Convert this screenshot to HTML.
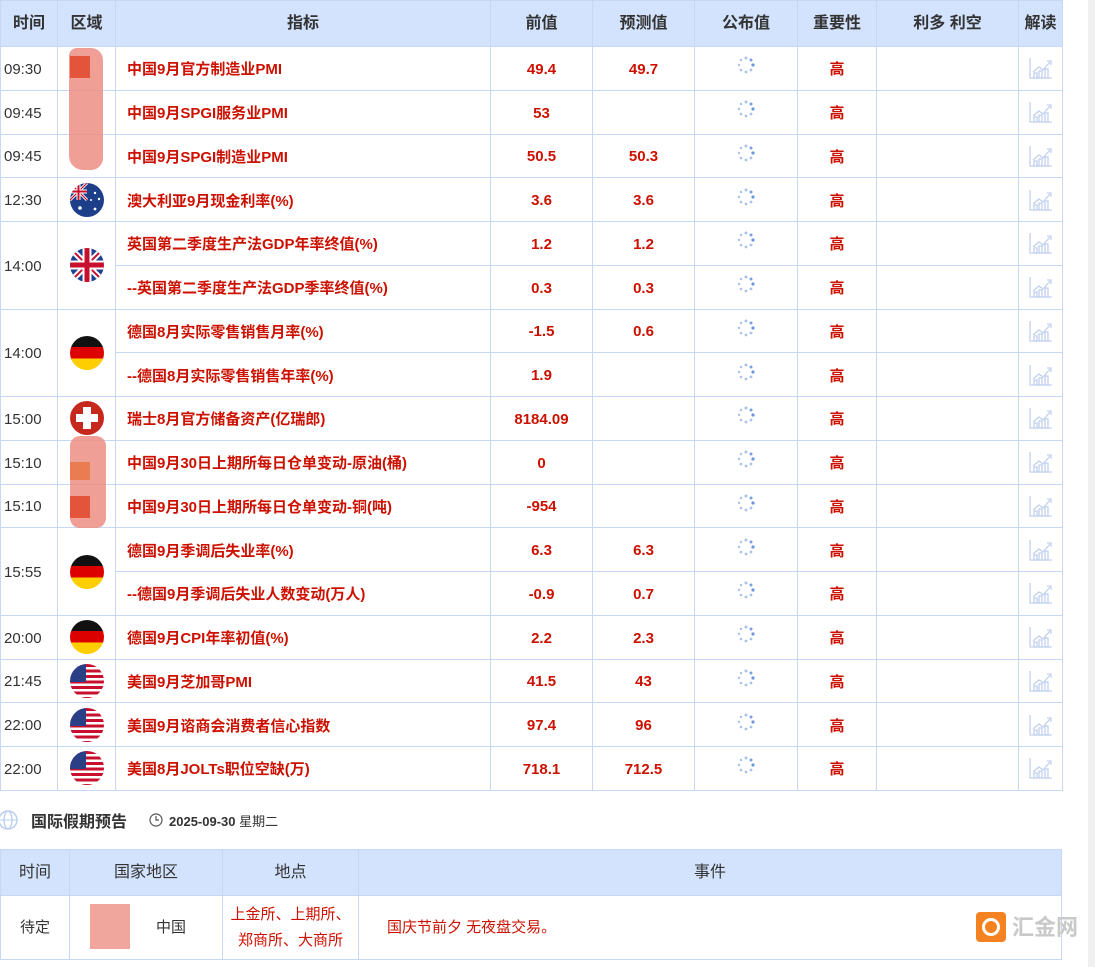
<!DOCTYPE html>
<html><head><meta charset="utf-8"><style>
*{margin:0;padding:0;box-sizing:border-box}
body{width:1095px;height:967px;background:#fff;font-family:"Liberation Sans","Noto Sans CJK SC",sans-serif;position:relative;overflow:hidden}
table{border-collapse:collapse;table-layout:fixed;position:absolute;left:0}
td,th{border:1px solid #c6d8f6;text-align:center;font-size:15px;vertical-align:middle;line-height:20px}
th{background:#d3e3fd;color:#333;font-weight:bold;height:46px;font-size:16px}
#t1 td{height:43.76px}
.t{color:#333;text-align:left;padding-left:3px;padding-top:3px}
.n{color:#cc1100;font-weight:bold;text-align:left;padding-left:11px;padding-top:4px}
.v{color:#cc1100;font-weight:bold;padding-top:3px}
.g{color:#cc1100;font-weight:bold;padding-top:4px}
.flag{width:34px;height:34px;border-radius:50%;margin:0 auto;overflow:hidden;position:relative;display:block}
.de{background:linear-gradient(#111 0 33%,#dd0000 33% 66%,#ffce00 66%)}
.us{background:repeating-linear-gradient(#c8102e 0 3px,#fff 3px 5.5px)}
.us::before{content:"";position:absolute;left:0;top:0;width:16px;height:18px;background:#2a3f85}
.blur{position:absolute;background:#ec8e84;opacity:.85}
.sc{position:absolute;right:0;top:0;width:7px;height:967px;background:#f0f0f0}
</style></head><body>
<table id="t1" style="top:0;width:1062px">
<colgroup><col style="width:57px"><col style="width:58px"><col style="width:375px"><col style="width:102px"><col style="width:102px"><col style="width:103px"><col style="width:79px"><col style="width:142px"><col style="width:44px"></colgroup>
<tr><th>时间</th><th>区域</th><th>指标</th><th>前值</th><th>预测值</th><th>公布值</th><th>重要性</th><th>利多 利空</th><th>解读</th></tr>
<tr><td class="t">09:30</td><td></td><td class="n">中国9月官方制造业PMI</td><td class="v">49.4</td><td class="v">49.7</td><td>S</td><td class="g">高</td><td></td><td>C</td></tr>
<tr><td class="t">09:45</td><td></td><td class="n">中国9月SPGI服务业PMI</td><td class="v">53</td><td class="v"></td><td>S</td><td class="g">高</td><td></td><td>C</td></tr>
<tr><td class="t">09:45</td><td></td><td class="n">中国9月SPGI制造业PMI</td><td class="v">50.5</td><td class="v">50.3</td><td>S</td><td class="g">高</td><td></td><td>C</td></tr>
<tr><td class="t">12:30</td><td><svg class="flag" viewBox="0 0 34 34"><rect width="34" height="34" fill="#1d3f8a"/><path d="M0 0L17 17M17 0L0 17" stroke="#fff" stroke-width="3"/><path d="M0 0L17 17M17 0L0 17" stroke="#c8102e" stroke-width="1.2"/><path d="M8.5 0v17M0 8.5h17" stroke="#fff" stroke-width="4"/><path d="M8.5 0v17M0 8.5h17" stroke="#c8102e" stroke-width="2"/><g fill="#fff"><circle cx="25" cy="10" r="1.2"/><circle cx="29" cy="16" r="1.2"/><circle cx="25" cy="26" r="1.4"/><circle cx="21" cy="17" r="1"/><circle cx="10" cy="25" r="1.8"/></g></svg></td><td class="n">澳大利亚9月现金利率(%)</td><td class="v">3.6</td><td class="v">3.6</td><td>S</td><td class="g">高</td><td></td><td>C</td></tr>
<tr><td class="t" rowspan="2">14:00</td><td rowspan="2"><svg class="flag" viewBox="0 0 34 34"><rect width="34" height="34" fill="#1f3f8f"/><path d="M0 0L34 34M34 0L0 34" stroke="#fff" stroke-width="6"/><path d="M0 0L34 34M34 0L0 34" stroke="#c8102e" stroke-width="2"/><path d="M17 0v34M0 17h34" stroke="#fff" stroke-width="9"/><path d="M17 0v34M0 17h34" stroke="#c8102e" stroke-width="5"/></svg></td><td class="n">英国第二季度生产法GDP年率终值(%)</td><td class="v">1.2</td><td class="v">1.2</td><td>S</td><td class="g">高</td><td></td><td>C</td></tr>
<tr><td class="n">--英国第二季度生产法GDP季率终值(%)</td><td class="v">0.3</td><td class="v">0.3</td><td>S</td><td class="g">高</td><td></td><td>C</td></tr>
<tr><td class="t" rowspan="2">14:00</td><td rowspan="2"><div class="flag de"></div></td><td class="n">德国8月实际零售销售月率(%)</td><td class="v">-1.5</td><td class="v">0.6</td><td>S</td><td class="g">高</td><td></td><td>C</td></tr>
<tr><td class="n">--德国8月实际零售销售年率(%)</td><td class="v">1.9</td><td class="v"></td><td>S</td><td class="g">高</td><td></td><td>C</td></tr>
<tr><td class="t">15:00</td><td><div class="flag" style="background:#c6281d"><span style="position:absolute;left:13px;top:6px;width:8px;height:22px;background:#fff"></span><span style="position:absolute;left:6px;top:13px;width:22px;height:8px;background:#fff"></span></div></td><td class="n">瑞士8月官方储备资产(亿瑞郎)</td><td class="v">8184.09</td><td class="v"></td><td>S</td><td class="g">高</td><td></td><td>C</td></tr>
<tr><td class="t">15:10</td><td></td><td class="n">中国9月30日上期所每日仓单变动-原油(桶)</td><td class="v">0</td><td class="v"></td><td>S</td><td class="g">高</td><td></td><td>C</td></tr>
<tr><td class="t">15:10</td><td></td><td class="n">中国9月30日上期所每日仓单变动-铜(吨)</td><td class="v">-954</td><td class="v"></td><td>S</td><td class="g">高</td><td></td><td>C</td></tr>
<tr><td class="t" rowspan="2">15:55</td><td rowspan="2"><div class="flag de"></div></td><td class="n">德国9月季调后失业率(%)</td><td class="v">6.3</td><td class="v">6.3</td><td>S</td><td class="g">高</td><td></td><td>C</td></tr>
<tr><td class="n">--德国9月季调后失业人数变动(万人)</td><td class="v">-0.9</td><td class="v">0.7</td><td>S</td><td class="g">高</td><td></td><td>C</td></tr>
<tr><td class="t">20:00</td><td><div class="flag de"></div></td><td class="n">德国9月CPI年率初值(%)</td><td class="v">2.2</td><td class="v">2.3</td><td>S</td><td class="g">高</td><td></td><td>C</td></tr>
<tr><td class="t">21:45</td><td><div class="flag us"></div></td><td class="n">美国9月芝加哥PMI</td><td class="v">41.5</td><td class="v">43</td><td>S</td><td class="g">高</td><td></td><td>C</td></tr>
<tr><td class="t">22:00</td><td><div class="flag us"></div></td><td class="n">美国9月谘商会消费者信心指数</td><td class="v">97.4</td><td class="v">96</td><td>S</td><td class="g">高</td><td></td><td>C</td></tr>
<tr><td class="t">22:00</td><td><div class="flag us"></div></td><td class="n">美国8月JOLTs职位空缺(万)</td><td class="v">718.1</td><td class="v">712.5</td><td>S</td><td class="g">高</td><td></td><td>C</td></tr>
</table>
<div class="blur" style="left:69px;top:48px;width:34px;height:122px;border-radius:8px 12px 12px 14px"></div>
<div class="blur" style="left:70px;top:56px;width:20px;height:22px;background:#e2472a"></div>
<div class="blur" style="left:70px;top:436px;width:36px;height:92px;border-radius:10px"></div>
<div class="blur" style="left:70px;top:462px;width:20px;height:18px;background:#e87745"></div>
<div class="blur" style="left:70px;top:496px;width:20px;height:22px;background:#e2472a"></div>
<div style="position:absolute;left:0;top:808px;font-size:16px;font-weight:bold;color:#333;display:flex;align-items:center">
<svg width="20" height="22" viewBox="0 0 20 22"><circle cx="8" cy="11" r="9" fill="none" stroke="#b9cdee" stroke-width="1.5"/><ellipse cx="8" cy="11" rx="4" ry="9" fill="none" stroke="#b9cdee" stroke-width="1.3"/><line x1="-1" y1="11" x2="17" y2="11" stroke="#b9cdee"/></svg>
<span style="margin-left:11px">国际假期预告</span>
<svg style="margin-left:22px" width="14" height="16" viewBox="0 0 14 16"><circle cx="7" cy="8" r="6" fill="none" stroke="#555" stroke-width="1.2"/><path d="M7 4v4h3" fill="none" stroke="#555" stroke-width="1.2"/></svg>
<span style="font-size:13px;margin-left:6px">2025-09-30 <span style="font-weight:normal">星期二</span></span></div>
<table style="top:849px;width:1061px">
<colgroup><col style="width:69px"><col style="width:153px"><col style="width:136px"><col style="width:703px"></colgroup>
<tr><th style="font-weight:normal">时间</th><th style="font-weight:normal">国家地区</th><th style="font-weight:normal">地点</th><th style="font-weight:normal">事件</th></tr>
<tr><td style="height:64px;color:#333">待定</td><td style="color:#333;padding-left:50px">中国</td><td style="color:#cc1100;line-height:26px">上金所、上期所、<br>郑商所、大商所</td><td style="color:#cc1100;text-align:left;padding-left:28px">国庆节前夕 无夜盘交易。</td></tr>
</table>
<div class="blur" style="left:90px;top:904px;width:40px;height:45px;background:#ef968c"></div>
<div style="position:absolute;left:976px;top:912px;width:30px;height:30px;background:#f58220;border-radius:4px"><div style="position:absolute;left:6px;top:6px;width:18px;height:18px;border-radius:50%;border:3px solid #fff"></div></div>
<div style="position:absolute;left:1012px;top:910px;color:#c9c9c9;font-size:22px;font-weight:bold">汇金网</div>
<div class="sc"></div>
<script>
document.querySelectorAll('#t1 td').forEach(function(td){
if(td.textContent==='S'){td.innerHTML='<svg width="18" height="18" viewBox="0 0 18 18" style="display:block;margin:-6px auto 0"><g fill="#a9c2ea"><circle cx="9" cy="2" r="1.5"/><circle cx="14" cy="4" r="1.5" fill="#7aa0e0"/><circle cx="16" cy="9" r="1.6" fill="#6c95dc"/><circle cx="14" cy="14" r="1.4"/><circle cx="9" cy="16" r="1.4"/><circle cx="4" cy="14" r="1.3"/><circle cx="2" cy="9" r="1.2"/><circle cx="4" cy="4" r="1.2"/></g></svg>'}
if(td.textContent==='C'){td.innerHTML='<svg width="24" height="22" viewBox="0 0 24 22" style="display:block;margin:0 auto"><g fill="none" stroke="#c3d1ee" stroke-width="1.3"><path d="M1 1v20h22"/><path d="M4 15l6-5 4 3 7-8"/><path d="M18 4h4v4"/><rect x="5" y="16" width="3" height="5"/><rect x="10" y="14" width="3" height="7"/><rect x="16" y="12" width="3" height="9"/></g></svg>'}
});
</script>
</body></html>
